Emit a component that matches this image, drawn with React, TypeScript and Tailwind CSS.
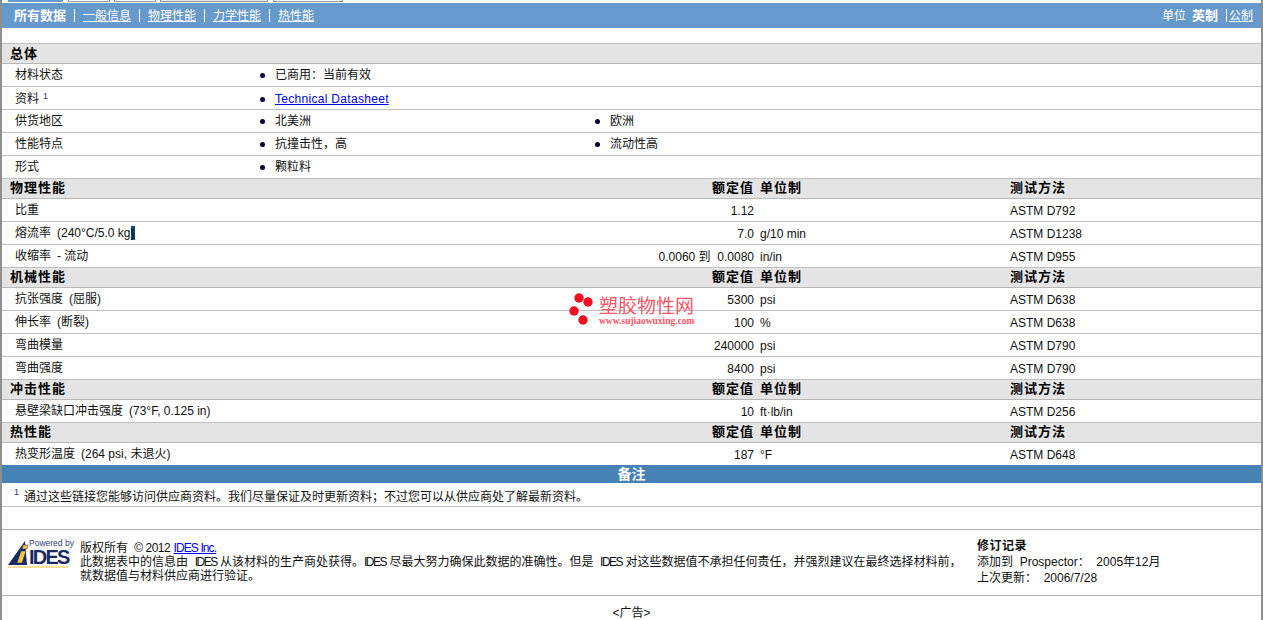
const tabs = [
  "ml-[6px] w-[55px] bg-[#6699cc]",
  "ml-[5px] w-[42px] border-x border-b border-[#999]",
  "ml-[4px] w-[42px] border-x border-b border-[#999]",
  "ml-[4px] w-[108px] border-x border-b border-[#999] bg-[#e8e8e8]",
  "ml-[5px] w-[70px] border-x border-b border-[#999]",
];

const navItems = ["一般信息", "物理性能", "力学性能", "热性能"];

type Prop = { label: string; note?: string; val: string; unit?: string; test: string };

const sections: { title: string; rows: Prop[] }[] = [
  {
    title: "物理性能",
    rows: [
      { label: "比重", val: "1.12", test: "ASTM D792" },
      { label: "熔流率", note: "(240°C/5.0 kg", val: "7.0", unit: "g/10 min", test: "ASTM D1238" },
      { label: "收缩率", note: "- 流动", val: "0.0060 到  0.0080", unit: "in/in", test: "ASTM D955" },
    ],
  },
  {
    title: "机械性能",
    rows: [
      { label: "抗张强度", note: "(屈服)", val: "5300", unit: "psi", test: "ASTM D638" },
      { label: "伸长率", note: "(断裂)", val: "100", unit: "%", test: "ASTM D638" },
      { label: "弯曲模量", val: "240000", unit: "psi", test: "ASTM D790" },
      { label: "弯曲强度", val: "8400", unit: "psi", test: "ASTM D790" },
    ],
  },
  {
    title: "冲击性能",
    rows: [
      { label: "悬壁梁缺口冲击强度", note: "(73°F, 0.125 in)", val: "10", unit: "ft·lb/in", test: "ASTM D256" },
    ],
  },
  {
    title: "热性能",
    rows: [
      { label: "热变形温度", note: "(264 psi, 未退火)", val: "187", unit: "°F", test: "ASTM D648" },
    ],
  },
];

const general = [
  { label: "材料状态", items: ["已商用：当前有效"] },
  { label: "资料", sup: "1", items: ["Technical Datasheet"], link: true },
  { label: "供货地区", items: ["北美洲", "欧洲"] },
  { label: "性能特点", items: ["抗撞击性，高", "流动性高"] },
  { label: "形式", items: ["颗粒料"] },
];

function Bullet({ text, link }: { text: string; link?: boolean }) {
  return (
    <div className="flex w-[335px] items-center">
      <span className="ml-[1px] mr-[10px] h-[5px] w-[5px] rounded-full bg-[#000033]" />
      {link ? <a className="tracking-[0.3px] text-[#0000ee] underline">{text}</a> : <span>{text}</span>}
    </div>
  );
}

function SectionHead({ title, cols }: { title: string; cols?: boolean }) {
  return (
    <div className="flex h-5 items-center border-b border-[#b8b8b8] bg-[#e4e4e4] pl-[8px] text-[13px] font-bold tracking-[1px] text-black">
      <span className={cols ? "-mt-0.5 w-[650px]" : "w-[650px]"}>{title}</span>
      {cols && (
        <>
          <span className="-mt-0.5 w-[94px] text-right">额定值</span>
          <span className="-mt-0.5 ml-[6px] w-[250px]">单位制</span>
          <span className="-mt-0.5">测试方法</span>
        </>
      )}
    </div>
  );
}

function DataRow({ row }: { row: Prop }) {
  return (
    <div className="flex h-[23px] items-center border-b border-[#c0c0c0] pl-[13px]">
      <span className="-mt-px w-[640px] whitespace-pre">
        {row.label}
        {row.note && <span className="ml-[6px]">{row.note}</span>}
        {row.note === "(240°C/5.0 kg" && <span className="bg-[#0a4a7a]">)</span>}
      </span>
      <span className="mt-px w-[99px] whitespace-pre text-right">{row.val}</span>
      <span className="mt-px ml-[6px] w-[250px]">{row.unit}</span>
      <span className="mt-px">{row.test}</span>
    </div>
  );
}

function IdesLogo() {
  return (
    <div className="relative h-[30px] w-[64px] shrink-0">
      <svg width="64" height="30" viewBox="0 0 64 30" className="absolute left-0 top-0">
        <path d="M0 25 L17 1 L19 25 Z" fill="#1b2a66" />
        <path d="M0 27 H60" stroke="#f2d478" strokeWidth="1.5" />
        <path d="M9 23 L13 11 L18 11 L14 23 Z M14 9 L15 5 L20 5 L19 9 Z" fill="#f3c93c" stroke="#1b2a66" strokeWidth="0.5" />
      </svg>
      <span className="absolute left-[21px] top-[-2px] whitespace-nowrap text-[8.5px] leading-[10px] text-[#34407c]">Powered by</span>
      <span className="absolute left-[21px] top-[10px] text-[20px] font-bold leading-[15px] tracking-[-1.8px] text-[#1b2a66]">IDES</span>
    </div>
  );
}

export default function App() {
  return (
    <div className="relative h-[620px] overflow-hidden border-x-2 border-[#8f8f8f] bg-[#fdfefd] text-[12px] leading-[14px] text-[#111] [font-family:'Liberation_Sans','Noto_Sans_CJK_SC',sans-serif]">
      <div className="flex h-[3px]">
        {tabs.map((t, i) => (
          <div key={i} className={`${t} h-[2px]`} />
        ))}
      </div>

      <div className="flex h-[25px] items-center justify-between bg-[#6699cc] pl-3 pr-2 text-white">
        <div className="flex items-center">
          <b className="text-[13px]">所有数据</b>
          {navItems.map((n) => (
            <span key={n} className="flex items-center">
              <span className="mx-2 h-[13px] w-px bg-white" />
              <a className="underline">{n}</a>
            </span>
          ))}
        </div>
        <div className="flex items-center">
          <span>单位</span>
          <b className="ml-[6px] text-[13px]">英制</b>
          <span className="ml-2 mr-px h-[13px] w-px bg-white" />
          <a className="ml-px underline">公制</a>
        </div>
      </div>

      <div className="h-[15px]" />

      <div className="border-t border-[#c0c0c0]">
        <SectionHead title="总体" />
        {general.map((g) => (
          <div key={g.label} className={g.sup ? "flex h-[23px] items-center border-b border-[#c0c0c0] pl-[13px] pt-0.5" : "flex h-[23px] items-center border-b border-[#c0c0c0] pl-[13px]"}>
            <span className="w-[244px]">
              {g.label}
              {g.sup && <sup className="ml-1 text-[9px] text-[#336]">{g.sup}</sup>}
            </span>
            {g.items.map((it) => (
              <Bullet key={it} text={it} link={g.link} />
            ))}
          </div>
        ))}
        {sections.map((s) => (
          <div key={s.title}>
            <SectionHead title={s.title} cols />
            {s.rows.map((r) => (
              <DataRow key={r.label} row={r} />
            ))}
          </div>
        ))}
      </div>

      <div className="relative -mt-px flex h-[18px] items-center justify-center bg-[#4682b4] text-[14px] font-bold text-white">备注</div>
      <div className="flex h-6 items-center border-b border-[#c0c0c0] pl-3 pt-1">
        <sup className="mr-[5px] text-[9px] text-[#336]">1</sup>
        通过这些链接您能够访问供应商资料。我们尽量保证及时更新资料；不过您可以从供应商处了解最新资料。
      </div>
      <div className="h-[23px] border-b border-[#b0b0b0]" />

      <div className="flex h-[66px] border-b border-[#b0b0b0] pl-[6px] pt-[10px]">
        <IdesLogo />
        <div className="ml-2 w-[892px] whitespace-nowrap pt-px leading-[14px]">
          <div>
            版权所有 <span className="ml-[3px] tracking-[-0.5px]">© 2012</span> <a className="tracking-[-0.9px] text-[#0000ee] underline">IDES Inc.</a>
          </div>
          <div>
            此数据表中的信息由 &nbsp;<span className="tracking-[-1.5px]">IDES</span> 从该材料的生产商处获得。<span className="tracking-[-1.5px]">IDES</span> 尽最大努力确保此数据的准确性。但是 &nbsp;<span className="tracking-[-1.5px]">IDES</span> 对这些数据值不承担任何责任，并强烈建议在最终选择材料前，
          </div>
          <div>就数据值与材料供应商进行验证。</div>
        </div>
        <div className="ml-[5px] -mt-[2px] leading-4">
          <b className="tracking-[0.5px]">修订记录</b>
          <div className="whitespace-pre">添加到  Prospector：  2005年12月</div>
          <div className="whitespace-pre">上次更新：  2006/7/28</div>
        </div>
      </div>

      <div className="pt-[10px] text-center text-[12px]">&lt;广告&gt;</div>

      <div className="absolute left-[566px] top-[292px] h-[36px] w-[130px]">
        <svg width="32" height="36" viewBox="0 0 32 36" className="absolute left-0 top-0">
          <circle cx="11" cy="6" r="4.7" fill="#f01020" />
          <circle cx="20" cy="10" r="4.7" fill="#f01020" />
          <circle cx="6" cy="19" r="4.7" fill="#f01020" />
          <circle cx="15" cy="28" r="4.7" fill="#f01020" />
        </svg>
        <span className="absolute left-[31px] top-[5px] whitespace-nowrap text-[19px] leading-5 text-[#f5566a]">塑胶物性网</span>
        <span className="absolute left-[31px] top-[24px] whitespace-nowrap text-[9.5px] font-bold leading-[10px] text-[#f5566a] [font-family:'Liberation_Serif',serif]">www.sujiaowuxing.com</span>
      </div>
    </div>
  );
}
